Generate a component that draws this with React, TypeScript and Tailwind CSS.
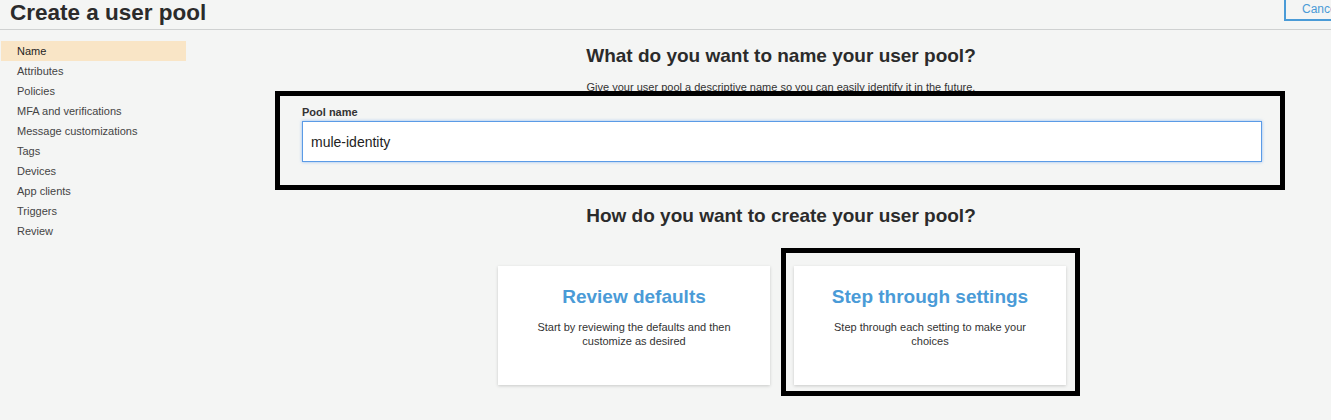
import { useState } from 'react';

const steps = [
  'Name',
  'Attributes',
  'Policies',
  'MFA and verifications',
  'Message customizations',
  'Tags',
  'Devices',
  'App clients',
  'Triggers',
  'Review',
];

function OptionCard({ title, text }: { title: string; text: string }) {
  return (
    <div className="w-[272px] h-[119px] bg-white shadow-[0_1px_3px_rgba(0,0,0,0.18)] flex flex-col items-center pt-[20px] px-[36px] text-center">
      <h3 className="text-[19px] leading-[22px] font-bold text-[#4a9bd7]">{title}</h3>
      <p className="mt-[12px] text-[11px] leading-[14px] text-[#333]">{text}</p>
    </div>
  );
}

export default function App() {
  const [poolName, setPoolName] = useState('mule-identity');

  return (
    <div className="w-[1331px] h-[420px] overflow-hidden bg-[#f4f5f4] text-[#333] font-['Liberation_Sans',Arial,sans-serif]">
      {/* Header */}
      <header className="h-[30px] border-b border-[#cfd1d1] flex items-start justify-between pl-[10px]">
        <h1 className="text-[22.5px] leading-[28px] font-bold text-[#2b2b2b] -mt-[1px]">Create a user pool</h1>
        <button className="-mt-[8px] -mr-[13px] w-[60px] h-[29px] border-2 border-[#4a9bd7] pl-[16px] pt-[5px] text-left text-[12px] leading-[14px] text-[#4a9bd7] bg-transparent overflow-hidden whitespace-nowrap">
          Cancel
        </button>
      </header>

      <div className="flex">
        {/* Steps */}
        <nav className="w-[186px] pt-[11px] pl-[1px] shrink-0">
          {steps.map((s, i) => (
            <div
              key={s}
              className={
                i === 0
                  ? 'h-[20px] flex items-center pl-[16px] text-[11px] text-[#1f1f1f] bg-[#f9e5c6]'
                  : 'h-[20px] flex items-center pl-[16px] text-[11px] text-[#444]'
              }
            >
              {s}
            </div>
          ))}
        </nav>

        {/* Main */}
        <main className="flex-1 ml-[45px] flex flex-col items-center">
          <h2 className="mt-[15px] text-[19px] leading-[22px] font-bold text-[#2b2b2b]">
            What do you want to name your user pool?
          </h2>
          <p className="mt-[13px] h-[11px] text-[11px] leading-[14px] text-[#333]">
            Give your user pool a descriptive name so you can easily identify it in the future.
          </p>

          <div className="relative -ml-[2px] w-[1010px] h-[99px] border-[5px] border-black pt-[9px] pl-[22px] pr-[18px]">
            <label className="block text-[11px] leading-[14px] font-bold text-[#333]">Pool name</label>
            <input
              autoFocus
              value={poolName}
              onChange={e => setPoolName(e.target.value)}
              className="mt-[2px] w-full h-[41px] bg-white border border-[#5b9be6] shadow-[0_0_3px_rgba(80,150,240,0.6)] px-[8px] text-[14px] text-[#222] outline-none caret-black"
            />
          </div>

          <h2 className="mt-[15px] text-[19px] leading-[22px] font-bold text-[#2b2b2b]">
            How do you want to create your user pool?
          </h2>

          <div className="mt-[39px] flex gap-[24px] ml-[2px]">
            <OptionCard
              title="Review defaults"
              text="Start by reviewing the defaults and then customize as desired"
            />
            <div className="relative">
              <OptionCard
                title="Step through settings"
                text="Step through each setting to make your choices"
              />
              <div className="absolute -top-[18px] -left-[13px] -right-[14px] -bottom-[11px] border-[5px] border-black pointer-events-none" />
            </div>
          </div>
        </main>
      </div>
    </div>
  );
}
